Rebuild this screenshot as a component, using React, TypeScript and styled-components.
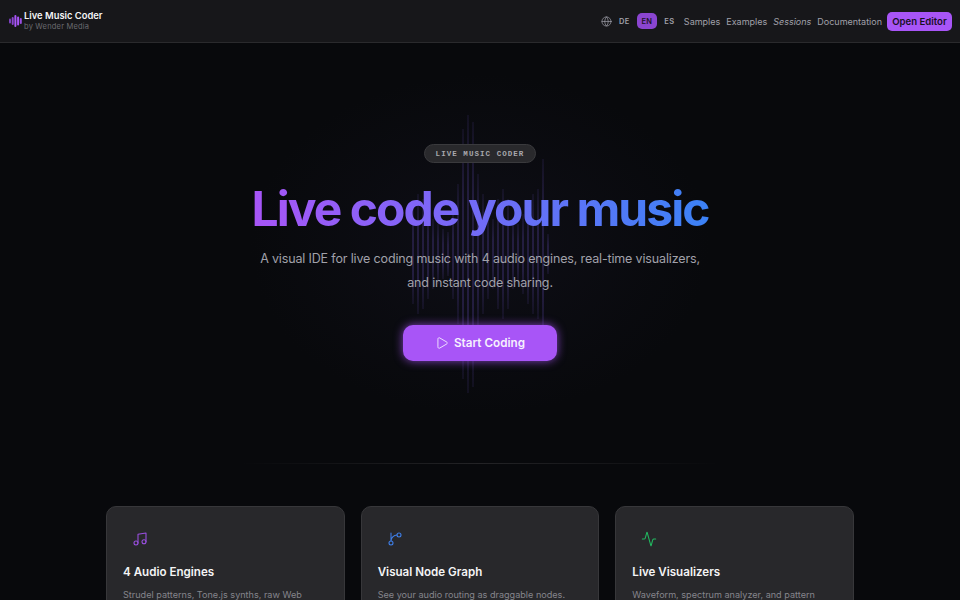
import React from "react";
import styled, { createGlobalStyle } from "styled-components";
import { Globe, Play, Music, Activity } from "lucide-react";

const GlobalStyle = createGlobalStyle`
  html, body {
    margin: 0;
    padding: 0;
    background: #08090c;
    font-family: Inter, "Liberation Sans", sans-serif;
    height: 600px;
    overflow: hidden;
  }
`;

const Page = styled.div`
  width: 960px;
  height: 600px;
  overflow: hidden;
  display: flex;
  flex-direction: column;
`;

const Header = styled.header`
  height: 42px;
  flex: none;
  background: #17171a;
  border-bottom: 1px solid #2a2a2d;
  display: flex;
  align-items: center;
  justify-content: space-between;
  padding: 0 8px 0 9px;
`;

const Brand = styled.div`
  display: flex;
  align-items: center;
  gap: 1px;
`;

const BrandText = styled.div`
  display: flex;
  flex-direction: column;
`;

const BrandName = styled.span`
  font-size: 9.4px;
  line-height: 12px;
  font-weight: 600;
  color: #f4f4f5;
`;

const BrandSub = styled.span`
  font-size: 7.5px;
  line-height: 10px;
  color: #6b6b70;
  letter-spacing: 0.2px;
`;

const Nav = styled.nav`
  display: flex;
  align-items: center;
`;

const LangGroup = styled.div`
  display: flex;
  align-items: center;
  gap: 2.5px;
  margin-right: -1.5px;
  color: #a1a1aa;
`;

const GlobeIcon = styled(Globe)`
  flex: none;
`;

const Lang = styled.span<{ $active?: boolean }>`
  width: 20px;
  height: 16px;
  display: flex;
  align-items: center;
  justify-content: center;
  border-radius: 5px;
  font-size: 7.5px;
  font-weight: 600;
  letter-spacing: 0.3px;
  color: ${(p) => (p.$active ? "#1d1226" : "#a1a1aa")};
  background: ${(p) => (p.$active ? "#8b45d0" : "transparent")};
`;

const NavLink = styled.a<{ $italic?: boolean }>`
  font-size: 9px;
  color: #a1a1aa;
  margin-left: 6px;
  font-style: ${(p) => (p.$italic ? "italic" : "normal")};
`;

const EditorButton = styled.button`
  margin-left: 5px;
  height: 19px;
  width: 65px;
  padding: 0;
  border: none;
  border-radius: 5px;
  background: #a855f7;
  color: #17101f;
  font-family: inherit;
  font-size: 9.6px;
  font-weight: 600;
`;

const Hero = styled.section`
  position: relative;
  flex: none;
  height: 420px;
  display: flex;
  flex-direction: column;
  align-items: center;
  padding-top: 101px;
  box-sizing: border-box;
  background: radial-gradient(ellipse 230px 170px at 50% 48%, #0e0e16 0%, #08090c 100%);
`;

const Wave = styled.div`
  position: absolute;
  left: 412px;
  top: 71px;
  width: 140px;
  height: 280px;
  display: flex;
  align-items: center;
  gap: 3px;
`;

const WaveBar = styled.i`
  display: block;
  flex: none;
  width: 2px;
  background: linear-gradient(
    180deg,
    rgba(100, 76, 190, 0.1),
    rgba(100, 76, 190, 0.26) 30%,
    rgba(100, 76, 190, 0.26) 70%,
    rgba(100, 76, 190, 0.1)
  );
`;

const Pill = styled.div`
  position: relative;
  height: 17px;
  padding: 0 11px;
  display: flex;
  align-items: center;
  border-radius: 10px;
  background: #29292c;
  border: 1px solid #3a3a3d;
  font-family: "Liberation Mono", monospace;
  font-size: 7.5px;
  font-weight: 700;
  letter-spacing: 1.05px;
  color: #a8a8ad;
`;

const Title = styled.h1`
  position: relative;
  margin: 17px 0 0;
  font-size: 48px;
  line-height: 58px;
  font-weight: 700;
  letter-spacing: -1.95px;
  background: linear-gradient(90deg, #a855f7, #3b82f6);
  -webkit-background-clip: text;
  background-clip: text;
  color: transparent;
`;

const Lead = styled.p`
  position: relative;
  margin: 9px 0 0;
  width: 452px;
  text-align: center;
  font-size: 12.5px;
  letter-spacing: -0.15px;
  line-height: 24px;
  color: #a1a1aa;
`;

const StartButton = styled.button`
  position: relative;
  margin-top: 30px;
  width: 154px;
  height: 36px;
  display: flex;
  align-items: center;
  justify-content: center;
  gap: 5px;
  border: none;
  border-radius: 10px;
  background: #a855f7;
  box-shadow: 0 0 10px rgba(168, 85, 247, 0.75);
  color: #f6f0fe;
  font-family: inherit;
  font-size: 11.7px;
  font-weight: 600;
`;

const Divider = styled.div`
  width: 480px;
  height: 1px;
  flex: none;
  align-self: center;
  background: linear-gradient(90deg, transparent, #232326 50%, transparent);
`;

const Cards = styled.section`
  margin-top: 42px;
  padding: 0 106px;
  display: grid;
  grid-template-columns: repeat(3, 1fr);
  gap: 16px;
`;

const Card = styled.article`
  height: 200px;
  box-sizing: border-box;
  padding: 20px 16px;
  background: #28282b;
  border: 1px solid #37373a;
  border-radius: 10px;
`;

const IconSlot = styled.div<{ $color: string }>`
  width: 34px;
  height: 24px;
  display: flex;
  align-items: center;
  justify-content: center;
  color: ${(p) => p.$color};
`;

const CardTitle = styled.h3`
  margin: 13px 0 0;
  font-size: 11.6px;
  line-height: 16px;
  font-weight: 600;
  color: #f4f4f5;
`;

const CardText = styled.p`
  margin: 8px 0 0;
  font-size: 9.1px;
  line-height: 14px;
  color: #85858b;
`;

const BranchIcon = ({ size, strokeWidth }: { size: number; strokeWidth: number }) => (
  <svg
    width={size}
    height={size}
    viewBox="0 0 24 24"
    fill="none"
    stroke="currentColor"
    strokeWidth={strokeWidth}
    strokeLinecap="round"
    strokeLinejoin="round"
  >
    <path d="M15 6a9 9 0 0 0-9 9V3" />
    <circle cx="18" cy="6" r="3" />
    <circle cx="6" cy="18" r="3" />
  </svg>
);

const bars = [
  100, 120, 110, 90, 70, 60, 50, 44, 90, 140, 250, 278, 265, 160, 120, 90, 70, 110, 130, 110, 70, 60, 80, 100, 120,
  130, 190, 40,
];

const features = [
  { title: "4 Audio Engines", text: "Strudel patterns, Tone.js synths, raw Web", color: "#9a4fe0", Icon: Music },
  { title: "Visual Node Graph", text: "See your audio routing as draggable nodes.", color: "#3f7fe8", Icon: BranchIcon },
  { title: "Live Visualizers", text: "Waveform, spectrum analyzer, and pattern", color: "#22b860", Icon: Activity },
];

const LogoMark = () => (
  <svg width="14" height="14" viewBox="0 0 14 14">
    <rect x="0" y="4.5" width="2" height="5" rx="1" fill="#7c3fc0" />
    <rect x="2.7" y="3" width="2" height="8" rx="1" fill="#8b45d0" />
    <rect x="5.4" y="1" width="2" height="12" rx="1" fill="#a855f7" />
    <rect x="8.1" y="2.5" width="2" height="9" rx="1" fill="#a855f7" />
    <rect x="10.8" y="4" width="2" height="6" rx="1" fill="#9a4fe0" />
  </svg>
);

export default function App() {
  return (
    <Page>
      <GlobalStyle />
      <Header>
        <Brand>
          <LogoMark />
          <BrandText>
            <BrandName>Live Music Coder</BrandName>
            <BrandSub>by Wender Media</BrandSub>
          </BrandText>
        </Brand>
        <Nav>
          <LangGroup>
            <GlobeIcon size={11} strokeWidth={1.5} />
            <Lang>DE</Lang>
            <Lang $active>EN</Lang>
            <Lang>ES</Lang>
          </LangGroup>
          <NavLink>Samples</NavLink>
          <NavLink>Examples</NavLink>
          <NavLink $italic>Sessions</NavLink>
          <NavLink>Documentation</NavLink>
          <EditorButton>Open Editor</EditorButton>
        </Nav>
      </Header>
      <Hero>
        <Wave>
          {bars.map((h, i) => (
            <WaveBar key={i} style={{ height: h }} />
          ))}
        </Wave>
        <Pill>LIVE MUSIC CODER</Pill>
        <Title>Live code your music</Title>
        <Lead>
          A visual IDE for live coding music with 4 audio engines, real-time visualizers, and instant code sharing.
        </Lead>
        <StartButton>
          <Play size={14} strokeWidth={1.5} />
          Start Coding
        </StartButton>
      </Hero>
      <Divider />
      <Cards>
        {features.map(({ title, text, color, Icon }) => (
          <Card key={title}>
            <IconSlot $color={color}>
              <Icon size={16} strokeWidth={1.6} />
            </IconSlot>
            <CardTitle>{title}</CardTitle>
            <CardText>{text}</CardText>
          </Card>
        ))}
      </Cards>
    </Page>
  );
}
